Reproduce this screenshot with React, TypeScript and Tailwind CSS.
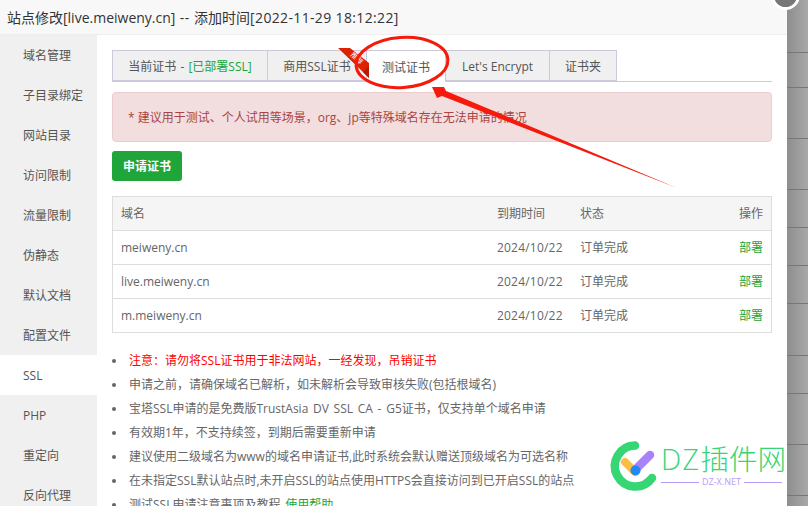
const FONT = "font-['Open_Sans','Noto_Sans_CJK_SC',sans-serif]";

const menu = ["域名管理", "子目录绑定", "网站目录", "访问限制", "流量限制", "伪静态", "默认文档", "配置文件", "SSL", "PHP", "重定向", "反向代理"];
const certs = ["meiweny.cn", "live.meiweny.cn", "m.meiweny.cn"];
const notes = [
  "申请之前，请确保域名已解析，如未解析会导致审核失败(包括根域名)",
  "宝塔SSL申请的是免费版TrustAsia DV SSL CA - G5证书，仅支持单个域名申请",
  "有效期1年，不支持续签，到期后需要重新申请",
  "建议使用二级域名为www的域名申请证书,此时系统会默认赠送顶级域名为可选名称",
  "在未指定SSL默认站点时,未开启SSL的站点使用HTTPS会直接访问到已开启SSL的站点",
];
// row heights of the list page showing behind the dialog
const backdropRows = ["h-[53px]", "h-[35px]", "h-[51px]", "h-[51px]", "h-[38px]", "h-[38px]", "h-[38px]", "h-[52px]", "h-[38px]", "h-[51px]", "h-[51px]"];

function Tabs() {
  const idle = "flex h-[31px] items-center justify-center border border-[#ccc9dd] bg-[#f0f0f0] pt-[2px] text-[#555]";
  return (
    <div className="relative flex h-[32px] border-b border-[#ccc9dd] text-[12px]">
      <div className={`${idle} w-[156px]`}>
        <span className="[word-spacing:1px]">当前证书 - <span className="text-[#20a53a]">[已部署SSL]</span></span>
      </div>
      <div className={`${idle} -ml-px w-[100px]`}>商用SSL证书</div>
      <div className="-ml-px flex h-[32px] w-[80px] items-center justify-center border border-b-0 border-[#ccc9dd] bg-white pt-[2px] text-[#555]">测试证书</div>
      <div className={`${idle} -ml-px w-[105px]`}>Let's Encrypt</div>
      <div className={`${idle} -ml-px w-[68px]`}>证书夹</div>
      {/* 推荐 ribbon on the corner of the commercial tab */}
      <svg className="absolute left-[226px] top-[-4px]" width="32" height="36" viewBox="0 0 32 36">
        <path d="M0 2 H12 L31 17 V32 L25 26 Z" fill="#dd2200" />
        <path d="M25 26 L31 32 V20 Z" fill="#b51a00" />
        <text x="12" y="9" fontSize="7" fill="#fff" transform="rotate(45 12 9)">推荐</text>
      </svg>
    </div>
  );
}

function CertTable() {
  const cell = "flex h-[34px] items-center border-t border-[#ddd] px-[8px] pt-[1px]";
  return (
    <div className="mt-[15px] border border-[#ddd] border-t-0 text-[12px] text-[#666]">
      <div className={`${cell} bg-[#f5f5f5]`}>
        <span className="w-[376px]">域名</span>
        <span className="w-[83px]">到期时间</span>
        <span className="flex-1">状态</span>
        <span>操作</span>
      </div>
      {certs.map((name) => (
        <div key={name} className={cell}>
          <span className="w-[376px]">{name}</span>
          <span className="w-[83px] tracking-[0.2px]">2024/10/22</span>
          <span className="flex-1">订单完成</span>
          <span className="text-[#20a53a]">部署</span>
        </div>
      ))}
    </div>
  );
}

function Dot() {
  return <span className="h-[4px] w-[4px] shrink-0 rounded-full bg-[#666]" />;
}

function Notes() {
  return (
    <ul className="mt-[16px] text-[12px] leading-[24px] text-[#666] [word-spacing:1.6px]">
      <li className="flex items-center gap-[13px] text-[#ff0000]"><Dot />注意：请勿将SSL证书用于非法网站，一经发现，吊销证书</li>
      {notes.map((n) => (
        <li key={n} className="flex items-center gap-[13px] whitespace-nowrap"><Dot />{n}</li>
      ))}
      <li className="flex items-center gap-[13px]"><Dot /><span>测试SSL申请注意事项及教程 <span className="text-[#20a53a]">使用帮助</span></span></li>
    </ul>
  );
}

function Watermark() {
  return (
    <div className="pointer-events-none absolute left-[604px] top-[436px] flex w-[183px] items-start gap-[1px] overflow-hidden">
      <svg className="shrink-0" width="56" height="56" viewBox="0 0 56 56">
        <path d="M31 9.5 A20.5 20.5 0 1 0 48 42" fill="none" stroke="#35d673" strokeWidth="8.5" strokeLinecap="round" />
        <path d="M21 26 L31 36" stroke="#fbbf45" strokeWidth="8" strokeLinecap="round" />
        <path d="M31 34 L46 19" stroke="#a981fb" strokeWidth="8.5" strokeLinecap="round" />
        <circle cx="31.5" cy="34.5" r="5" fill="#1e8cf8" />
      </svg>
      <div className="flex flex-col pt-[6px]">
        <span className="whitespace-nowrap text-[28.5px] font-light leading-[35px] text-[#35d673]">
          <span className="tracking-[1.5px]">DZ</span>插件网
        </span>
        <div className="flex items-center gap-[3px] text-[9px] leading-[10px] text-[#b79cf8]">
          <span className="h-px w-[38px] bg-[#b79cf8]" />
          <span className="whitespace-nowrap">DZ-X.NET</span>
          <span className="h-px w-[38px] bg-[#b79cf8]" />
        </div>
      </div>
    </div>
  );
}

export default function App() {
  return (
    <div className={`${FONT} relative flex h-[506px] w-[808px] overflow-hidden bg-[#999]`}>
      <div className="flex w-[787px] shrink-0 flex-col bg-white">
        <div className="flex h-[35px] shrink-0 items-center whitespace-pre border-b border-[#eee] bg-[#f8f8f8] pl-[7px] text-[14px] text-[#333]">
          站点修改[live.meiweny.cn]<span className="tracking-[0.6px]"> -- </span>添加时间<span className="tracking-[0.35px]">[2022-11-29 18:12:22]</span>
        </div>
        <div className="flex min-h-0 flex-1">
          <div className="w-[97px] shrink-0 bg-[#f0f0f0] text-[12px] text-[#555]">
            {menu.map((m) => (
              <div key={m} className={`flex h-[40px] items-center pl-[23px] pt-[2px] ${m === "SSL" ? "bg-white" : ""}`}>{m}</div>
            ))}
          </div>
          <div className="box-content w-[660px] pl-[15px] pt-[15px]">
            <Tabs />
            <div className="mt-[10px] flex h-[50px] items-center rounded-[4px] border border-[#ebccd1] bg-[#f2dede] pl-[15px] pt-[1px] text-[12px] text-[#a94442]">
              * 建议用于测试、个人试用等场景，org、jp等特殊域名存在无法申请的情况
            </div>
            <button className="mt-[9px] flex h-[30px] w-[70px] items-center justify-center rounded-[3px] bg-[#20a53a] pt-[1px] text-[12px] font-bold text-white">申请证书</button>
            <CertTable />
            <Notes />
          </div>
        </div>
      </div>
      {/* page behind the dialog */}
      <div className="flex flex-1 flex-col bg-gradient-to-r from-[#8e8e8e] to-[#a8a8a8]">
        {backdropRows.map((h, i) => (
          <div key={i} className={`${h} shrink-0 border-b border-[#777]`} />
        ))}
      </div>
      {/* dialog close button */}
      <div className="absolute left-[771px] top-[-19px] h-[29px] w-[29px] rounded-full border-[3px] border-white bg-[#777]" />
      {/* markup drawn over the tabs */}
      <svg className="pointer-events-none absolute left-0 top-0" width="808" height="506" viewBox="0 0 808 506">
        <ellipse cx="402" cy="62.5" rx="46" ry="25" fill="none" stroke="#f51a0c" strokeWidth="3" transform="rotate(-4 402 62.5)" />
        <path d="M432 87 L444 87 L446 91 L677 188 L442 96 L437 98 Z" fill="#f51a0c" />
      </svg>
      <Watermark />
    </div>
  );
}
